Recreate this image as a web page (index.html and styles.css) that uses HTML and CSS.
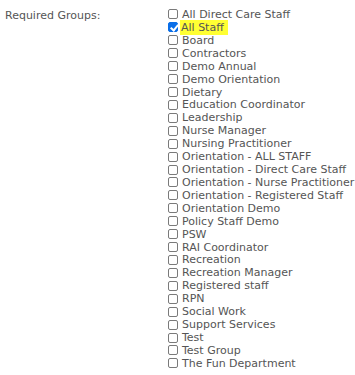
FILE: index.html
```html
<!DOCTYPE html>
<html lang="en">
<head>
    <meta charset="UTF-8">
    <title>Required Groups</title>
    <link rel="stylesheet" href="styles.css">
</head>
<body>
    <div class="field">
        <div class="field-label">Required Groups:</div>
        <div class="group-list">
            <label class="group"><input type="checkbox"><span>All Direct Care Staff</span></label>
            <label class="group"><input type="checkbox" checked><span class="mark">All Staff</span></label>
            <label class="group"><input type="checkbox"><span>Board</span></label>
            <label class="group"><input type="checkbox"><span>Contractors</span></label>
            <label class="group"><input type="checkbox"><span>Demo Annual</span></label>
            <label class="group"><input type="checkbox"><span>Demo Orientation</span></label>
            <label class="group"><input type="checkbox"><span>Dietary</span></label>
            <label class="group"><input type="checkbox"><span>Education Coordinator</span></label>
            <label class="group"><input type="checkbox"><span>Leadership</span></label>
            <label class="group"><input type="checkbox"><span>Nurse Manager</span></label>
            <label class="group"><input type="checkbox"><span>Nursing Practitioner</span></label>
            <label class="group"><input type="checkbox"><span>Orientation - ALL STAFF</span></label>
            <label class="group"><input type="checkbox"><span>Orientation - Direct Care Staff</span></label>
            <label class="group"><input type="checkbox"><span>Orientation - Nurse Practitioner</span></label>
            <label class="group"><input type="checkbox"><span>Orientation - Registered Staff</span></label>
            <label class="group"><input type="checkbox"><span>Orientation Demo</span></label>
            <label class="group"><input type="checkbox"><span>Policy Staff Demo</span></label>
            <label class="group"><input type="checkbox"><span>PSW</span></label>
            <label class="group"><input type="checkbox"><span>RAI Coordinator</span></label>
            <label class="group"><input type="checkbox"><span>Recreation</span></label>
            <label class="group"><input type="checkbox"><span>Recreation Manager</span></label>
            <label class="group"><input type="checkbox"><span>Registered staff</span></label>
            <label class="group"><input type="checkbox"><span>RPN</span></label>
            <label class="group"><input type="checkbox"><span>Social Work</span></label>
            <label class="group"><input type="checkbox"><span>Support Services</span></label>
            <label class="group"><input type="checkbox"><span>Test</span></label>
            <label class="group"><input type="checkbox"><span>Test Group</span></label>
            <label class="group"><input type="checkbox"><span>The Fun Department</span></label>
        </div>
    </div>
</body>
</html>
```

FILE: styles.css
```css
body {
    margin: 0;
    background: #fff;
    font-family: Verdana, "DejaVu Sans", sans-serif;
    font-size: 11px;
    color: #555;
}
.field {
    display: flex;
    padding: 8px 0 0 5px;
}
.field-label {
    width: 163px;
    line-height: 13px;
    padding-top: 1px;
}
.group-list {
    display: flex;
    flex-direction: column;
}
.group {
    display: flex;
    align-items: center;
    height: 12.93px;
    line-height: 13px;
    white-space: nowrap;
}
.group input {
    appearance: none;
    width: 10px;
    height: 10px;
    margin: 0 4px 0 0;
    border: 1px solid #7a7a7a;
    border-radius: 2px;
    background: #fff;
    flex-shrink: 0;
    position: relative;
}
.group input:checked {
    background: #0a6ee8;
    border-color: #0a6ee8;
}
.group input:checked::after {
    content: "";
    position: absolute;
    left: 3px;
    top: 0px;
    width: 3px;
    height: 6px;
    border: solid #fff;
    border-width: 0 2px 2px 0;
    transform: rotate(40deg);
}
.mark {
    background: #ffff33;
    padding: 1px 4px 1px 1px;
    margin-left: -2px;
}
```
